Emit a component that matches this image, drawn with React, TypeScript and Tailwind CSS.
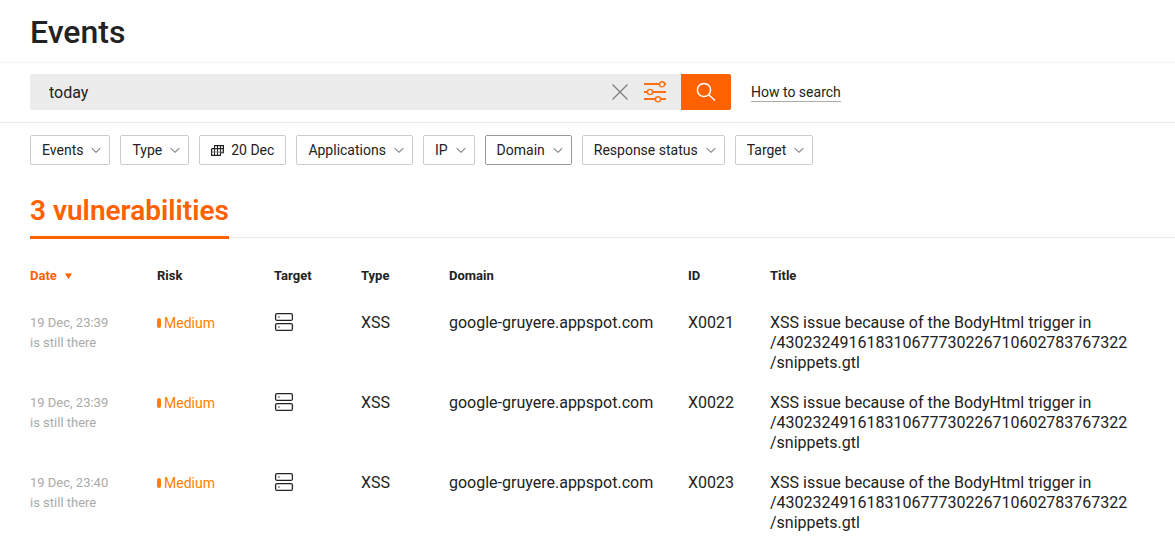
import { useState } from "react";

const filters = [
  { label: "Events" },
  { label: "Type" },
  { label: "20 Dec", calendar: true },
  { label: "Applications" },
  { label: "IP" },
  { label: "Domain", active: true },
  { label: "Response status" },
  { label: "Target" },
];

const rows = [
  { time: "19 Dec, 23:39", id: "X0021" },
  { time: "19 Dec, 23:39", id: "X0022" },
  { time: "19 Dec, 23:40", id: "X0023" },
];

function Chevron() {
  return (
    <svg width="10" height="6" viewBox="0 0 10 6" fill="none" stroke="#333" strokeWidth="0.9" aria-hidden="true">
      <path d="M0.7 1.2 5 5.4 9.3 1.2" />
    </svg>
  );
}

function CalendarIcon() {
  return (
    <svg width="13" height="11" viewBox="0 0 13 11" fill="none" stroke="#222" aria-hidden="true">
      <path d="M3.5 0V11M6.5 0V11M9.5 0V11" />
      <path strokeWidth="1.2" d="M3.5 0.6H12.4V7.6H9.5M0.6 3.7V10.4H9.5M0.6 3.7H12.4" />
      <path stroke="#777" d="M0.6 7H12.4" />
    </svg>
  );
}

function CloseIcon() {
  return (
    <svg width="16" height="16" viewBox="0 0 16 16" fill="none" stroke="#808080" strokeWidth="1.4" aria-hidden="true">
      <path d="M0.5 0.5 15.5 15.5M15.5 0.5 0.5 15.5" />
    </svg>
  );
}

function SettingsIcon() {
  return (
    <svg width="22" height="22" viewBox="0 0 22 22" fill="none" stroke="#ff6f14" aria-hidden="true">
      <path strokeWidth="1.8" d="M0 3H15M20.5 3H22M0 11H3M9 11H22M0 18H11M17 18H22" />
      <g strokeWidth="1.4">
        <circle cx="18" cy="3.3" r="2.6" />
        <circle cx="6" cy="11" r="2.6" />
        <circle cx="14" cy="18.3" r="2.6" />
      </g>
    </svg>
  );
}

function SearchIcon() {
  return (
    <svg width="20" height="20" viewBox="0 0 20 20" fill="none" stroke="#fff" strokeWidth="1.5" aria-hidden="true">
      <circle cx="8" cy="8" r="6.6" />
      <path d="M12.7 12.7 19 18.5" />
    </svg>
  );
}

function ServerIcon() {
  return (
    <svg width="20" height="20" viewBox="0 0 20 20" fill="none" stroke="#222" strokeWidth="1.3" role="img" aria-label="Server">
      <rect x="1.6" y="1.6" width="16.8" height="6.8" rx="1.5" />
      <rect x="1.6" y="11.6" width="16.8" height="6.8" rx="1.5" />
      <path stroke="#aaa" strokeWidth="2" d="M4 5H6M4 15H6" />
    </svg>
  );
}

export default function App() {
  const [query, setQuery] = useState("today");

  return (
    <div className="bg-white font-[Roboto,sans-serif] text-[#222]">
      <header className="border-b border-[#f2f2f2] px-[30px] pt-3 pb-[10px]">
        <h1 className="text-[32px] leading-10 font-medium">Events</h1>
      </header>

      <div className="flex items-center border-b border-[#ebebe6] px-[30px] pt-[11px] pb-3">
        <form className="flex h-9 w-[701px] overflow-hidden rounded-xs bg-[#ececec]" onSubmit={(e) => e.preventDefault()}>
          <input
            aria-label="Search events"
            className="min-w-0 flex-1 bg-transparent pt-px pl-[19px] text-base outline-none"
            value={query}
            onChange={(e) => setQuery(e.target.value)}
          />
          <button type="button" aria-label="Clear" className="flex w-8 items-center justify-center" onClick={() => setQuery("")}>
            <CloseIcon />
          </button>
          <button type="button" aria-label="Search settings" className="mr-[10px] ml-[3px] flex w-8 items-center justify-center">
            <SettingsIcon />
          </button>
          <button type="submit" aria-label="Search" className="flex w-[50px] items-center justify-center bg-[#ff6000]">
            <SearchIcon />
          </button>
        </form>
        <a href="#help" className="ml-5 border-b border-[#aaa] text-sm leading-[18px]">
          How to search
        </a>
      </div>

      <div className="flex flex-wrap gap-[10px] px-[30px] pt-3">
        {filters.map((f) => (
          <button
            key={f.label}
            type="button"
            className={`flex h-[30px] items-center rounded-xs border pl-[11px] text-sm ${f.active ? "border-[#999]" : "border-[#ccc]"} ${f.calendar ? "gap-[7px] pr-[11px]" : "gap-2 pr-2"}`}
          >
            {f.calendar && <CalendarIcon />}
            {f.label}
            {!f.calendar && <Chevron />}
          </button>
        ))}
      </div>

      <div className="mt-[26px] ml-[30px] flex border-b border-[#ebebeb]">
        <h2 className="-mb-0.5 border-b-3 border-[#ff6000] pb-[5px] text-[28px] leading-10 font-semibold text-[#ff6000]">
          3 vulnerabilities
        </h2>
      </div>

      <div className="pt-7 pr-8 pl-[30px]">
        <table className="w-full table-fixed text-left align-top text-base leading-5">
          <colgroup>
            <col className="w-[127px]" />
            <col className="w-[117px]" />
            <col className="w-[87px]" />
            <col className="w-[88px]" />
            <col className="w-[239px]" />
            <col className="w-[82px]" />
            <col />
          </colgroup>
          <thead className="text-[13px]">
            <tr>
              <th className="pb-[27px] font-bold text-[#ff6000]" aria-sort="descending">
                <button type="button" className="flex items-center gap-2">
                  Date
                  <svg width="7" height="6" viewBox="0 0 7 6" fill="#ff6000" aria-hidden="true">
                    <path d="M0 0.5H7L3.5 6Z" />
                  </svg>
                </button>
              </th>
              <th className="pb-[27px] font-bold">Risk</th>
              <th className="pb-[27px] font-bold">Target</th>
              <th className="pb-[27px] font-bold">Type</th>
              <th className="pb-[27px] font-bold">Domain</th>
              <th className="pb-[27px] font-bold">ID</th>
              <th className="pb-[27px] font-bold">Title</th>
            </tr>
          </thead>
          <tbody>
            {rows.map((r) => (
              <tr key={r.id} className="align-top">
                <td className="pb-5 text-[13px] text-[#aaa]">
                  {r.time}
                  <br />
                  is still there
                </td>
                <td className="pb-5 text-sm leading-5 text-[#ff8000]">
                  <span className="flex items-center gap-[3px]">
                    <span className="h-[10px] w-1 rounded-xs bg-[#ff8000]" />
                    Medium
                  </span>
                </td>
                <td className="pb-5">
                  <div className="-mt-px">
                    <ServerIcon />
                  </div>
                </td>
                <td className="pb-5">XSS</td>
                <td className="pb-5">google-gruyere.appspot.com</td>
                <td className="pb-5">{r.id}</td>
                <td className="pb-5">
                  XSS issue because of the BodyHtml trigger in <br />
                  /430232491618310677730226710602783767322
                  <wbr />
                  /snippets.gtl
                </td>
              </tr>
            ))}
          </tbody>
        </table>
      </div>
    </div>
  );
}
